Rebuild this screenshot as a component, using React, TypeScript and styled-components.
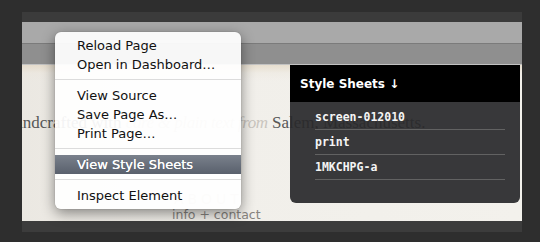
import styled, { createGlobalStyle } from 'styled-components'

const GlobalStyle = createGlobalStyle`
	html, body {
		margin: 0;
		padding: 0;
		background: #2e2e2e;
		overflow: hidden;
	}
`

const Frame = styled.div`
	position: relative;
	width: 540px;
	height: 242px;
	box-sizing: border-box;
	padding: 12px 18px 10px 22px;
`

const Window = styled.div`
	width: 500px;
	display: flex;
	flex-direction: column;
`

const TitleStrip = styled.div`
	height: 10px;
	background: #3b3b3b;
`

const Toolbar = styled.div`
	height: 21px;
	background: #a9a9a9;
	border-bottom: 1px solid #7b7b7b;
`

const Bookmarks = styled.div`
	height: 20px;
	background: #8f8f8f;
	border-bottom: 1px solid #c2c2c2;
`

const Page = styled.div`
	position: relative;
	height: 156px;
	overflow: hidden;
	background:
		linear-gradient(180deg, rgba(226, 214, 194, 0.7) 0px, rgba(236, 230, 220, 0.4) 8px, rgba(0, 0, 0, 0) 16px),
		linear-gradient(90deg, #ebe8e2 0%, #f1efea 40%, #f3f1ec 100%);
	font-family: 'Liberation Serif', serif;
`

const Tagline = styled.p`
	margin: 48px 0 0;
	white-space: nowrap;
	text-indent: -19px;
	font-size: 17px;
	line-height: 20px;
	color: #575757;

	em {
		color: #c9c5be;
		letter-spacing: -0.4px;
	}
`

const Nav = styled.div`
	margin: 0 0 0 150px;
	padding-top: 58px;
	display: flex;
	flex-direction: column;
	font-family: 'DejaVu Sans', sans-serif;
`

const NavTitle = styled.span`
	font-size: 14px;
	line-height: 16px;
	letter-spacing: 4px;
	color: #cfcac2;
	padding-left: 2px;
`

const NavSub = styled.span`
	font-size: 12.5px;
	line-height: 15px;
	color: #878480;
`

const BottomStrip = styled.div`
	height: 11px;
	background: #3c3c3c;
`

const StylePanel = styled.div`
	position: absolute;
	top: 0;
	left: 268px;
	width: 230px;
	font-family: 'DejaVu Sans', sans-serif;
`

const PanelHeader = styled.div`
	height: 37px;
	display: flex;
	align-items: center;
	padding-left: 10px;
	background: #000;
	color: #fff;
	font-weight: bold;
	font-size: 12px;
`

const PanelBody = styled.ul`
	margin: 0;
	padding: 3px 15px 23px 25px;
	list-style: none;
	background: rgba(40, 40, 42, 0.92);
	border-radius: 0 0 6px 6px;
`

const PanelItem = styled.li`
	height: 24px;
	display: flex;
	align-items: center;
	border-bottom: 1px solid #626262;
	color: #f4f4f4;
	font-family: 'DejaVu Sans Mono', monospace;
	font-weight: bold;
	font-size: 11.5px;
`

const ContextMenu = styled.div`
	position: absolute;
	top: 32px;
	left: 55px;
	width: 186px;
	padding: 4px 0;
	box-sizing: border-box;
	background: rgba(255, 255, 255, 0.93);
	border-radius: 6px;
	box-shadow: 0 4px 14px rgba(0, 0, 0, 0.45), 0 0 1px rgba(0, 0, 0, 0.4);
	font-family: 'DejaVu Sans', sans-serif;
	font-size: 13px;
`

const MenuItem = styled.div<{ $active?: boolean }>`
	height: 19px;
	line-height: 19px;
	padding-left: 22px;
	white-space: nowrap;
	color: ${(p) => (p.$active ? '#fff' : '#111')};
	background: ${(p) =>
		p.$active ? 'linear-gradient(180deg, #7a818c 0%, #59606c 100%)' : 'transparent'};
	text-shadow: ${(p) => (p.$active ? '0 0 0.5px #fff' : 'none')};
`

const Separator = styled.div`
	height: 1px;
	margin: 5px 0 6px;
	background: #dcdcdc;
`

const sheets = ['screen-012010', 'print', '1MKCHPG-a']

export default function App() {
	return (
		<>
			<GlobalStyle />
			<Frame>
				<Window>
					<TitleStrip />
					<Toolbar />
					<Bookmarks />
					<Page>
						<Tagline>
							Handcrafted with <em>care &amp; plain text from</em> Salem, Massachusetts.
						</Tagline>
						<Nav>
							<NavTitle>ABOUT</NavTitle>
							<NavSub>info + contact</NavSub>
						</Nav>
						<StylePanel>
							<PanelHeader>Style Sheets ↓</PanelHeader>
							<PanelBody>
								{sheets.map((s) => (
									<PanelItem key={s}>{s}</PanelItem>
								))}
							</PanelBody>
						</StylePanel>
					</Page>
					<BottomStrip />
				</Window>
				<ContextMenu>
					<MenuItem>Reload Page</MenuItem>
					<MenuItem>Open in Dashboard…</MenuItem>
					<Separator />
					<MenuItem>View Source</MenuItem>
					<MenuItem>Save Page As…</MenuItem>
					<MenuItem>Print Page…</MenuItem>
					<Separator />
					<MenuItem $active>View Style Sheets</MenuItem>
					<Separator />
					<MenuItem>Inspect Element</MenuItem>
				</ContextMenu>
			</Frame>
		</>
	)
}
